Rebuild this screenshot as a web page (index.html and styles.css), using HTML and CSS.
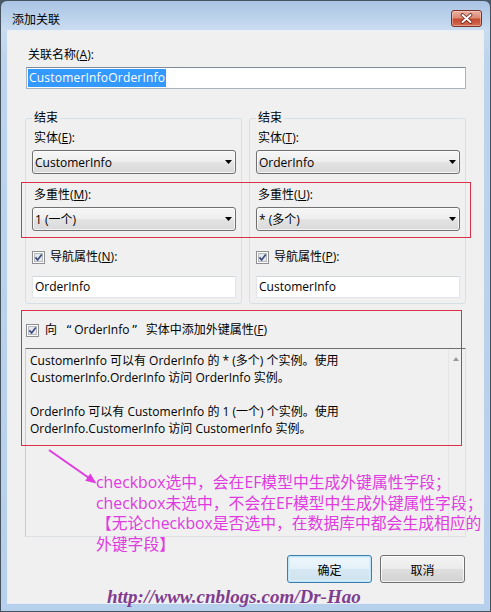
FILE: index.html
```html
<!DOCTYPE html>
<html lang="zh-CN">
<head>
<meta charset="utf-8">
<title>添加关联</title>
<link rel="stylesheet" href="styles.css">
</head>
<body>
<div class="window">
  <div class="titlebar">
    <span class="title">添加关联</span>
    <span class="close">
      <svg width="13" height="11" viewBox="0 0 13 11"><path d="M2.5 2 10.5 9M10.5 2 2.5 9" stroke="#6a2016" stroke-width="3.6" stroke-linecap="round"/><path d="M2.5 2 10.5 9M10.5 2 2.5 9" stroke="#fff" stroke-width="2" stroke-linecap="round"/></svg>
    </span>
  </div>
  <div class="client">
    <div class="label main-label">关联名称(<u>A</u>):</div>
    <div class="name-input"><span class="sel">CustomerInfoOrderInfo</span></div>
    <div class="groups">
      <fieldset class="group">
        <legend>结束</legend>
        <div class="label first">实体(<u>E</u>):</div>
        <div class="combo"><span>CustomerInfo</span><svg class="drop" width="7" height="4" viewBox="0 0 7 4"><path d="M0 0H7L3.5 4Z" fill="#000"/></svg></div>
        <div class="label mult">多重性(<u>M</u>):</div>
        <div class="combo"><span>1 (一个)</span><svg class="drop" width="7" height="4" viewBox="0 0 7 4"><path d="M0 0H7L3.5 4Z" fill="#000"/></svg></div>
        <div class="check-row">
          <svg class="cb" width="13" height="13" viewBox="0 0 13 13"><rect x=".5" y=".5" width="12" height="12" fill="#fdfdfd" stroke="#8e8f8f"/><rect x="2.5" y="2.5" width="8" height="8" fill="#e6e8ec" stroke="#b7bbc1"/><path d="M3.4 6.4 5.6 8.9 9.8 3.4" fill="none" stroke="#3d4f7e" stroke-width="1.7"/></svg>
          <span>导航属性(<u>N</u>):</span>
        </div>
        <div class="textbox">OrderInfo</div>
      </fieldset>
      <fieldset class="group">
        <legend>结束</legend>
        <div class="label first">实体(<u>T</u>):</div>
        <div class="combo"><span>OrderInfo</span><svg class="drop" width="7" height="4" viewBox="0 0 7 4"><path d="M0 0H7L3.5 4Z" fill="#000"/></svg></div>
        <div class="label mult">多重性(<u>U</u>):</div>
        <div class="combo"><span>* (多个)</span><svg class="drop" width="7" height="4" viewBox="0 0 7 4"><path d="M0 0H7L3.5 4Z" fill="#000"/></svg></div>
        <div class="check-row">
          <svg class="cb" width="13" height="13" viewBox="0 0 13 13"><rect x=".5" y=".5" width="12" height="12" fill="#fdfdfd" stroke="#8e8f8f"/><rect x="2.5" y="2.5" width="8" height="8" fill="#e6e8ec" stroke="#b7bbc1"/><path d="M3.4 6.4 5.6 8.9 9.8 3.4" fill="none" stroke="#3d4f7e" stroke-width="1.7"/></svg>
          <span>导航属性(<u>P</u>):</span>
        </div>
        <div class="textbox">CustomerInfo</div>
      </fieldset>
    </div>
    <div class="fk-row">
      <svg class="cb" width="13" height="13" viewBox="0 0 13 13"><rect x=".5" y=".5" width="12" height="12" fill="#fdfdfd" stroke="#8e8f8f"/><rect x="2.5" y="2.5" width="8" height="8" fill="#e6e8ec" stroke="#b7bbc1"/><path d="M3.4 6.4 5.6 8.9 9.8 3.4" fill="none" stroke="#3d4f7e" stroke-width="1.7"/></svg>
      <span>向<span class="q-open">“</span>OrderInfo<span class="q-close">”</span>实体中添加外键属性(<u>F</u>)</span>
    </div>
    <div class="desc">
      <div class="desc-text">
        <p>CustomerInfo 可以有 OrderInfo 的 * (多个) 个实例。使用<br>CustomerInfo.OrderInfo 访问 OrderInfo 实例。</p>
        <p>OrderInfo 可以有 CustomerInfo 的 1 (一个) 个实例。使用<br>OrderInfo.CustomerInfo 访问 CustomerInfo 实例。</p>
      </div>
      <div class="scrollbar"><span class="up"></span></div>
    </div>
    <div class="buttons">
      <div class="btn default">确定</div>
      <div class="btn">取消</div>
    </div>
  </div>
  <div class="overlay">
    <div class="redbox r1"></div>
    <div class="redbox r2"></div>
    <svg class="arrow" width="65" height="50" viewBox="0 0 65 50"><path d="M9 10 49 38" stroke="#e03ae0" stroke-width="2" fill="none"/><path d="M56.5 43.5 45.3 40.8 50.3 33.6Z" fill="#e03ae0"/></svg>
    <div class="note">
      <div>checkbox选中，会在EF模型中生成外键属性字段；</div>
      <div>checkbox未选中，不会在EF模型中生成外键属性字段；</div>
      <div>【无论checkbox是否选中，在数据库中都会生成相应的</div>
      <div>外键字段】</div>
    </div>
    <div class="watermark">http://www.cnblogs.com/Dr-Hao</div>
  </div>
</div>
</body>
</html>
```

FILE: styles.css
```css
* { box-sizing: border-box; }
html, body { margin: 0; padding: 0; }
body {
  width: 491px;
  height: 612px;
  overflow: hidden;
  background: #4a5868;
  font-family: "Open Sans", "Noto Sans CJK SC", sans-serif;
  font-size: 12px;
  color: #000;
}
u { text-decoration: underline; text-underline-offset: 1px; }
.q-open { font-family: "DejaVu Sans", sans-serif; margin: 0 2px 0 9px; }
.q-close { font-family: "DejaVu Sans", sans-serif; margin: 0 8px 0 2px; }

.window {
  position: relative;
  width: 491px;
  height: 612px;
  border: 1px solid #46535f;
  border-radius: 7px 7px 0 0;
  background: linear-gradient(180deg, #a9c4e4 0px, #c9dcf0 28px, #bcd4ed 60px, #b7d0eb 100%);
  display: flex;
  flex-direction: column;
}

.titlebar {
  height: 29px;
  flex: none;
  display: flex;
  justify-content: space-between;
  align-items: flex-start;
  padding: 9px 8px 0 11px;
}
.title {
  font-family: "Noto Sans CJK SC", sans-serif;
  font-size: 12px;
  line-height: 17px;
  color: #000;
}
.close {
  width: 31px;
  height: 17px;
  border: 1px solid #7a3227;
  border-radius: 3px;
  background: linear-gradient(180deg, #eab3a5 0%, #dc8a74 45%, #c64a31 55%, #d36c52 100%);
  box-shadow: inset 0 0 0 1px rgba(255, 220, 210, 0.45);
  display: flex;
  align-items: center;
  justify-content: center;
}

.client {
  flex: 1;
  margin: 0 6px 7px;
  border: 1px solid #e8eff7;
  background: #f0f0f0;
  padding: 16px 17px 0 17px;
}

.label { line-height: 16px; padding-left: 2px; white-space: nowrap; }
.main-label { padding-left: 3px; }

.name-input {
  margin: 4px 0 0 1px;
  height: 22px;
  border: 1px solid #abb5c1;
  border-top-color: #7d8a99;
  background: #fff;
  padding: 1px 1px;
}
.sel {
  display: inline-block;
  background: #3399ff;
  color: #fff;
  line-height: 18px;
  padding: 0 1px;
  letter-spacing: 0.2px;
}

.groups {
  display: grid;
  grid-template-columns: 1fr 1fr;
  column-gap: 7px;
  margin-top: 21px;
}
.group {
  margin: 0;
  min-width: 0;
  border: 1px solid #d5dfe5;
  border-radius: 3px;
  padding: 0 5px 5px 6px;
}
.group legend {
  padding: 0 2px;
  line-height: 16px;
}
.label.first { margin-top: 4px; }
.label.mult { margin-top: 13px; }

.combo {
  margin-top: 4px;
  height: 24px;
  border: 1px solid #707070;
  border-radius: 3px;
  background: linear-gradient(180deg, #f6f6f6 0%, #eeeeee 50%, #e3e3e3 52%, #d9d9d9 100%);
  box-shadow: inset 0 0 0 1px rgba(255, 255, 255, 0.7);
  display: flex;
  align-items: center;
  justify-content: space-between;
  padding: 0 3px 0 2px;
  white-space: nowrap;
}
.drop { flex: none; }

.check-row {
  margin-top: 18px;
  height: 16px;
  display: flex;
  align-items: center;
  gap: 5px;
  line-height: 16px;
  white-space: nowrap;
}
.cb { flex: none; }

.textbox {
  margin-top: 11px;
  height: 22px;
  border: 1px solid #e2e5ea;
  border-top-color: #d3d7dd;
  background: #fff;
  padding: 0 2px;
  line-height: 20px;
  white-space: nowrap;
}

.fk-row {
  margin-top: 18px;
  height: 16px;
  padding-left: 1px;
  display: flex;
  align-items: center;
  gap: 6px;
  line-height: 16px;
  white-space: nowrap;
}

.desc {
  margin-top: 10px;
  height: 189px;
  border: 1px solid #dde1e6;
  border-top-color: #6f6f6f;
  border-left-color: #c9cdd3;
  background: #f0f0f0;
  display: flex;
}
.desc-text {
  flex: 1;
  padding: 3px 4px;
  line-height: 17px;
  white-space: nowrap;
}
.desc-text p { margin: 0 0 17px; }
.scrollbar {
  width: 17px;
  flex: none;
  border-left: 1px solid #e6e6e6;
  background: #f0f0f0;
  padding: 8px 0 0 4px;
}
.up {
  display: block;
  width: 0;
  height: 0;
  border-left: 3.5px solid transparent;
  border-right: 3.5px solid transparent;
  border-bottom: 4px solid #9a9a9a;
}

.buttons {
  margin-top: 18px;
  display: flex;
  justify-content: flex-end;
  gap: 8px;
  padding-right: 1px;
}
.btn {
  width: 85px;
  height: 28px;
  border: 1px solid #707070;
  border-radius: 3px;
  background: linear-gradient(180deg, #f3f3f3 0%, #ececec 48%, #dedede 52%, #d2d2d2 100%);
  box-shadow: inset 0 0 0 1px rgba(255, 255, 255, 0.75);
  display: flex;
  align-items: center;
  justify-content: center;
  font-family: "Noto Sans CJK SC", sans-serif;
  font-size: 12px;
}
.btn.default {
  border-color: #3c7fb1;
  box-shadow: inset 0 0 0 1px #bfe4f8, inset 0 0 0 2px #d8eefa;
  background: linear-gradient(180deg, #eef7fc 0%, #e4f1f9 48%, #d6e8f3 52%, #cfe2ee 100%);
}

.overlay {
  position: absolute;
  left: -1px;
  top: -1px;
  width: 491px;
  height: 612px;
  pointer-events: none;
}
.redbox {
  position: absolute;
  border: 1px solid #dc2f48;
}
.r1 { left: 21px; top: 182px; width: 450px; height: 56px; }
.r2 { left: 21px; top: 310px; width: 441px; height: 136px; }
.arrow { position: absolute; left: 40px; top: 440px; }
.note {
  position: absolute;
  left: 96px;
  top: 472px;
  font-family: "Open Sans", "Noto Sans CJK SC", sans-serif;
  font-size: 15.8px;
  line-height: 20.5px;
  color: #e03ae0;
  white-space: nowrap;
}
.watermark {
  position: absolute;
  left: 107px;
  top: 587px;
  font-family: "Liberation Serif", serif;
  font-style: italic;
  font-weight: bold;
  font-size: 19px;
  line-height: 20px;
  color: #803c8e;
  white-space: nowrap;
}
```
